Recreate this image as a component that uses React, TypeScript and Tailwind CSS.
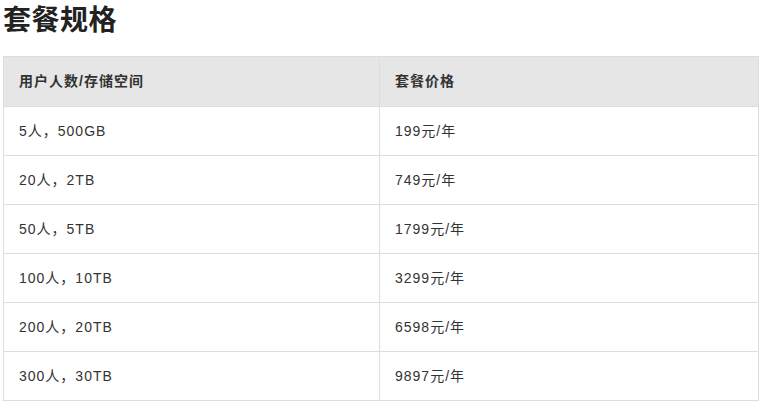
import React from 'react';

const rows = [
  { users: '5人，500GB', price: '199元/年' },
  { users: '20人，2TB', price: '749元/年' },
  { users: '50人，5TB', price: '1799元/年' },
  { users: '100人，10TB', price: '3299元/年' },
  { users: '200人，20TB', price: '6598元/年' },
  { users: '300人，30TB', price: '9897元/年' },
];

const App: React.FC = () => {
  return (
    <div
      className="w-[762px] h-[405px] bg-white px-[3px] text-[#333]"
      style={{ fontFamily: '"Liberation Sans", Arial, "Noto Sans CJK SC", sans-serif' }}
    >
      <h2 className="text-[28px] font-bold leading-[40px] pt-[1px] tracking-[0.5px] text-[#222]">套餐规格</h2>
      <table className="mt-[15px] w-[756px] border-collapse text-[14px] tracking-[1px] table-fixed">
        <colgroup>
          <col className="w-[376px]" />
          <col />
        </colgroup>
        <thead>
          <tr className="bg-[#e6e6e6] h-[50px]">
            <th className="border border-[#ddd] pl-[15px] pr-4 text-left font-bold">用户人数/存储空间</th>
            <th className="border border-[#ddd] pl-[15px] pr-4 text-left font-bold">套餐价格</th>
          </tr>
        </thead>
        <tbody>
          {rows.map((r) => (
            <tr key={r.users} className="h-[49px]">
              <td className="border border-[#ddd] pl-[15px] pr-4">{r.users}</td>
              <td className="border border-[#ddd] pl-[15px] pr-4">{r.price}</td>
            </tr>
          ))}
        </tbody>
      </table>
    </div>
  );
};

export default App;
